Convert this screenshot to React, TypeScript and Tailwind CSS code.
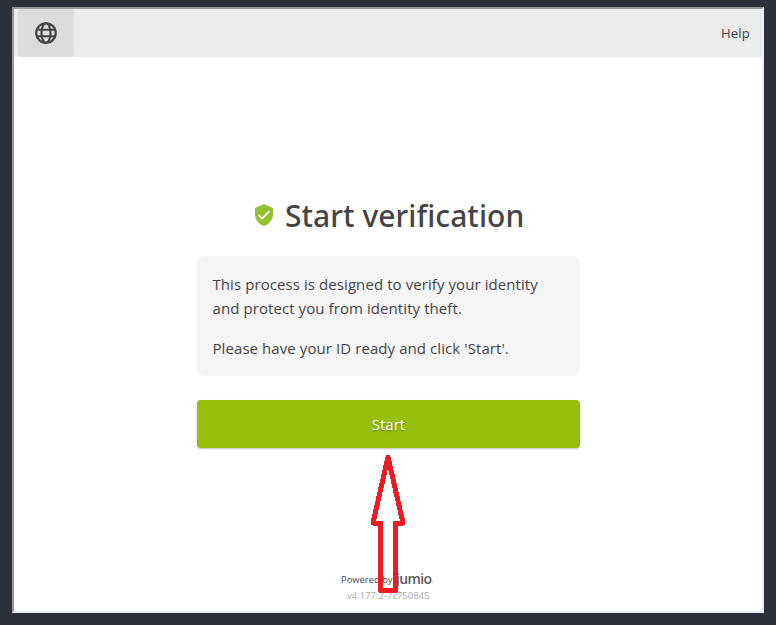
import React from "react";

function GlobeIcon() {
  return (
    <svg className="h-[26px] w-[26px]" viewBox="0 0 24 24" fill="none" stroke="#444" strokeWidth="2">
      <circle cx="12" cy="12" r="9" />
      <ellipse cx="12" cy="12" rx="4.2" ry="9" />
      <path d="M3.6 9h16.8M3.6 15h16.8" />
    </svg>
  );
}

function ShieldIcon() {
  return (
    <svg className="mb-0.5 h-6 w-6 shrink-0" viewBox="0 0 24 24">
      <path d="M12 1 3 5v6c0 5.55 3.84 10.74 9 12 5.16-1.26 9-6.45 9-12V5z" fill="#93c132" />
      <path d="m6.7 12.2 3.4 3.4 7.2-7.2" fill="none" stroke="#fff" strokeWidth="1.8" />
    </svg>
  );
}

function Arrow() {
  return (
    <svg className="pointer-events-none absolute left-[368px] top-[452px]" width="40" height="144" viewBox="368 452 40 144">
      <path
        d="M388 457 373 523h7.5v67.5h15V523h7.5z"
        fill="none"
        stroke="#ed1c24"
        strokeWidth="5"
        strokeLinejoin="round"
        shapeRendering="crispEdges"
      />
    </svg>
  );
}

export default function App() {
  return (
    <div className="relative h-[625px] w-[776px] overflow-hidden bg-[#2c303a] pl-3 pt-[7px] font-['Open_Sans','Noto_Sans',sans-serif] text-[#444]">
      <div className="flex h-[606px] w-[752px] flex-col border-2 border-b-[#eee] border-l-[#9a9a9a] border-r-[#eee] border-t-[#9a9a9a] bg-white">
        <header className="flex h-12 shrink-0 items-center justify-between bg-[#ebebeb] pl-1 pr-3">
          <button className="flex h-12 w-14 items-center justify-center rounded bg-[#dcdcdc]">
            <GlobeIcon />
          </button>
          <a className="text-[13px] leading-5 tracking-[0.2px]">Help</a>
        </header>
        <main className="ml-[183px] mt-[135px] w-[383px]">
          <h1 className="flex h-12 items-center pl-[55px]">
            <ShieldIcon />
            <span className="ml-[9px] whitespace-nowrap font-['Noto_Sans'] text-[30px] font-medium leading-[48px] tracking-[0.05px]">Start verification</span>
          </h1>
          <section className="mt-4 h-[120px] whitespace-nowrap rounded-lg bg-[#f5f5f5] pl-[15.5px] pt-4 text-[15px] leading-6 tracking-[0.08px]">
            <p>This process is designed to verify your identity<br />and protect you from identity theft.</p>
            <p className="mt-4">Please have your ID ready and click 'Start'.</p>
          </section>
          <button className="mt-6 flex h-12 w-full items-center justify-center rounded bg-[#97be0d] text-[15px] text-white shadow-[0_1px_2px_rgba(0,0,0,0.25)] [text-shadow:0_1px_2px_rgba(0,0,0,0.35)]">
            Start
          </button>
        </main>
        <footer className="ml-[327px] mt-[122px] whitespace-nowrap">
          <div className="flex h-[18px] items-center">
            <span className="w-[55px] pt-px text-[9.3px] leading-4 tracking-[0.05px]">Powered by</span>
            <span className="-mt-px text-[14px] font-semibold leading-4 tracking-[-0.65px] text-[#5c5c5c]">jumio</span>
            <span className="text-[8px] leading-4 text-[#999]">.</span>
          </div>
          <div className="ml-[6px] text-[9.5px] leading-[15px] text-[#aaa]">v4.177.2-7c750845</div>
        </footer>
      </div>
      <Arrow />
    </div>
  );
}
